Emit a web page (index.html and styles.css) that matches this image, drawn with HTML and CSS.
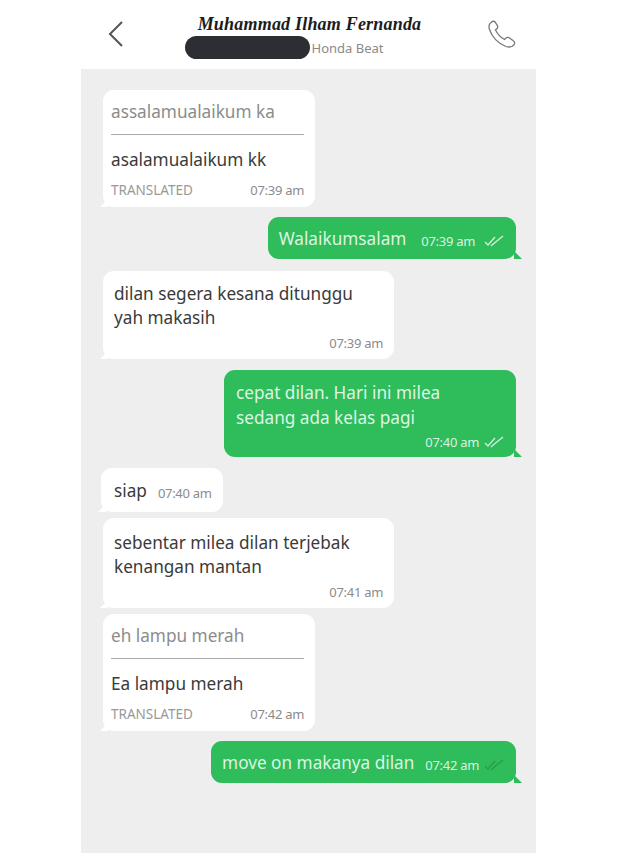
FILE: index.html
```html
<!DOCTYPE html>
<html lang="id">

<head>
  <meta charset="UTF-8">
  <meta name="viewport" content="width=device-width, initial-scale=1.0">
  <title>Chat</title>
  <link rel="stylesheet" href="styles.css">
</head>

<body>
  <header class="topbar">
    <svg class="back" width="18" height="28" viewBox="0 0 18 28">
      <path d="M15 2 L3 14 L15 26" fill="none" stroke="#555" stroke-width="2" />
    </svg>
    <div class="contact">
      <div class="name">Muhammad Ilham Fernanda</div>
      <div class="sub">
        <span class="blackout"></span>
        <span class="bike">Honda Beat</span>
      </div>
    </div>
    <svg class="call" width="30" height="30" viewBox="0 0 30 30">
      <path d="M4 3.5 C2 5 1.5 7.5 2.5 10.5 C5 18 11.5 25 19 27.5 C22.5 28.5 26 27.5 27.5 25 C28 23.5 27.5 22.5 26 21.5 L22.5 19 C21 18 19.5 18 18.5 19.5 L17.5 20.5 C13.5 18.5 10.5 15 8.5 11 L10 9.5 C11 8.5 11 7.5 10.3 6.3 L8 3 C7 1.8 5.5 2.3 4 3.5 Z" fill="none" stroke="#777" stroke-width="1.3" />
    </svg>
  </header>

  <main class="chat">
    <div class="bubble in translated">
      <div class="original">assalamualaikum ka</div>
      <div class="text">asalamualaikum kk</div>
      <div class="meta"><span class="label">TRANSLATED</span><span class="time">07:39 am</span></div>
    </div>

    <div class="bubble out single gap-d">
      <span class="text">Walaikumsalam</span>
      <span class="time">07:39 am</span>
      <svg class="ticks" width="21" height="12" viewBox="0 0 21 12"><path d="M1 7 L4 10 L11 2 M7 11 L8 10 L19 1" fill="none" stroke="#d5f0dc" stroke-width="1.3" /></svg>
    </div>

    <div class="bubble in wide gap-b">
      <div class="text">dilan segera kesana ditunggu<br>yah makasih</div>
      <div class="meta end"><span class="time">07:39 am</span></div>
    </div>

    <div class="bubble out multi gap-a">
      <div class="text">cepat dilan. Hari ini milea<br>sedang ada kelas pagi</div>
      <div class="meta end">
        <span class="time">07:40 am</span>
        <svg class="ticks" width="21" height="12" viewBox="0 0 21 12"><path d="M1 7 L4 10 L11 2 M7 11 L8 10 L19 1" fill="none" stroke="#d5f0dc" stroke-width="1.3" /></svg>
      </div>
    </div>

    <div class="bubble in short gap-a">
      <span class="text">siap</span>
      <span class="time">07:40 am</span>
    </div>

    <div class="bubble in wide tall gap-c">
      <div class="text">sebentar milea dilan terjebak<br>kenangan mantan</div>
      <div class="meta end"><span class="time">07:41 am</span></div>
    </div>

    <div class="bubble in translated gap-c">
      <div class="original">eh lampu merah</div>
      <div class="text">Ea lampu merah</div>
      <div class="meta"><span class="label">TRANSLATED</span><span class="time">07:42 am</span></div>
    </div>

    <div class="bubble out single tight gap-d">
      <span class="text">move on makanya dilan</span>
      <span class="time">07:42 am</span>
      <svg class="ticks" width="21" height="12" viewBox="0 0 21 12"><path d="M1 7 L4 10 L11 2 M7 11 L8 10 L19 1" fill="none" stroke="#2a9a4c" stroke-width="1.3" /></svg>
    </div>
  </main>
</body>

</html>
```

FILE: styles.css
```css
body {
  font-family: 'Noto Sans', 'Open Sans', sans-serif;
  background-color: white;
  margin: 0;
  height: 853px;
  overflow: hidden;
}

.topbar {
  height: 69px;
  width: 455px;
  margin-left: 81px;
  display: flex;
  align-items: center;
  justify-content: space-between;
  box-sizing: border-box;
  padding: 4px 19px 0 26px;
}

.back,
.call {
  margin-bottom: 6px;
}

.contact {
  display: flex;
  flex-direction: column;
  align-items: center;
  margin-left: 7px;
}

.name {
  font-family: 'Liberation Serif', serif;
  font-style: italic;
  font-weight: bold;
  font-size: 18px;
  line-height: 20px;
  letter-spacing: 0.2px;
  color: #1c1c1c;
  white-space: nowrap;
}

.sub {
  display: flex;
  align-items: center;
  gap: 2px;
  margin-right: 51px;
  margin-top: 2px;
}

.blackout {
  width: 125px;
  height: 23px;
  background: #2c2e33;
  border-radius: 12px;
}

.bike {
  font-size: 13px;
  color: #8a8a8a;
}

.chat {
  width: 455px;
  height: 784px;
  margin-left: 81px;
  background-color: #eeeeee;
  display: flex;
  flex-direction: column;
  box-sizing: border-box;
  padding: 21px 20px 0 22px;
}

.bubble {
  position: relative;
  box-sizing: border-box;
  border-radius: 11px;
  font-size: 17.2px;
}

.bubble::after {
  content: '';
  position: absolute;
  bottom: 0;
  width: 8px;
  height: 8px;
}

.in {
  background: white;
  color: #3a3a3a;
  align-self: flex-start;
}

.in::after {
  left: -3px;
  background: white;
  clip-path: polygon(100% 0, 100% 100%, 0 100%);
}

.out {
  background: #2fbc5b;
  color: #dcf6e3;
  align-self: flex-end;
}

.out::after {
  right: -6px;
  background: #2fbc5b;
  clip-path: polygon(0 0, 100% 100%, 0 100%);
}

.gap-a {
  margin-top: 11px;
}

.gap-b {
  margin-top: 12px;
}

.gap-c {
  margin-top: 6px;
}

.gap-d {
  margin-top: 10px;
}

.time {
  font-size: 13px;
  letter-spacing: -0.3px;
  color: #8b8b8b;
}

.out .time {
  color: #d9f3e0;
}

.translated {
  width: 212px;
  height: 117px;
  padding: 9px 11px 0 8px;
}

.original {
  color: #8c8c8c;
  line-height: 26px;
  height: 35px;
  border-bottom: 1px solid #aaa;
}

.translated .text {
  margin-top: 12px;
  line-height: 26px;
}

.meta {
  display: flex;
  justify-content: space-between;
  align-items: center;
  margin-top: 8px;
}

.label {
  font-size: 13.5px;
  color: #999;
}

.end {
  justify-content: flex-end;
  gap: 5px;
}

.single {
  height: 42px;
  padding: 0 11px;
  display: flex;
  align-items: center;
  gap: 15px;
}

.tight {
  gap: 11px;
}

.single .time,
.short .time {
  margin-top: 5px;
}

.single .ticks {
  margin-left: -6px;
  margin-top: 5px;
}

.wide {
  width: 291px;
  height: 88px;
  padding: 11px 11px 0 11px;
  line-height: 24px;
}

.wide .meta {
  margin-top: 1px;
}

.tall {
  height: 90px;
  padding-top: 13px;
}

.multi {
  width: 292px;
  height: 87px;
  padding: 11px 11px 0 12px;
  line-height: 24.5px;
}

.multi .meta {
  margin-top: 0;
}

.short {
  width: 122px;
  height: 44px;
  margin-left: -2px;
  padding: 0 11px 0 13px;
  display: flex;
  align-items: center;
  gap: 11px;
}
```
